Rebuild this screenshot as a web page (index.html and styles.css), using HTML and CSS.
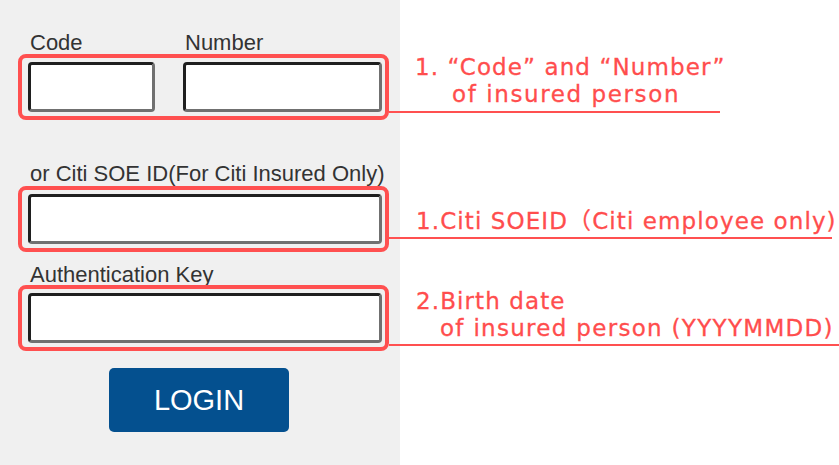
FILE: index.html
```html
<!DOCTYPE html>
<html lang="en">
<head>
<meta charset="utf-8">
<title>Login</title>
<link rel="stylesheet" href="styles.css">
</head>
<body>
<div class="page">
  <div class="form">
    <div class="labels-row">
      <span class="label label-code">Code</span>
      <span class="label label-number">Number</span>
    </div>
    <div class="row">
      <div class="hl">
        <div class="input input-code"></div>
        <div class="input input-number"></div>
      </div>
      <div class="note note1">
        <span class="nl nl1a">1. “Code” and “Number”</span>
        <span class="nl nl1b">of insured person</span>
      </div>
    </div>

    <div class="label label-soe">or Citi SOE ID(For Citi Insured Only)</div>
    <div class="row row-soe">
      <div class="hl">
        <div class="input input-wide"></div>
      </div>
      <div class="note note2">
        <span class="nl">1.Citi SOEID（Citi employee only)</span>
      </div>
    </div>

    <div class="label label-auth">Authentication Key</div>
    <div class="row row-auth">
      <div class="hl">
        <div class="input input-wide"></div>
      </div>
      <div class="note note3">
        <span class="nl">2.Birth date</span>
        <span class="nl nl3b">of insured person (YYYYMMDD)</span>
      </div>
    </div>

    <div class="btn-row">
      <button class="login" type="button">LOGIN</button>
    </div>
  </div>
</div>
</body>
</html>
```

FILE: styles.css
```css
* { box-sizing: border-box; }
html, body { margin: 0; padding: 0; }
body {
  font-family: "Liberation Sans", Arial, sans-serif;
  background: #ffffff;
}
.page {
  width: 839px;
  height: 465px;
  overflow: hidden;
  background: linear-gradient(to right, #f0f0f0 0, #f0f0f0 400px, #ffffff 400px);
}
.form {
  padding-top: 32px;
}
.label {
  font-size: 22px;
  line-height: 22px;
  color: #333333;
  white-space: nowrap;
}
.labels-row {
  display: flex;
  padding-left: 30px;
}
.label-code { width: 155px; }
.label-soe { margin-top: 43px; padding-left: 30px; }
.label-auth { margin-top: 12px; margin-bottom: -1px; padding-left: 30px; }

.row {
  display: flex;
  margin-left: 18px;
}
.row-soe { margin-top: 1px; }
.hl {
  width: 371px;
  flex: none;
  display: flex;
  gap: 28px;
  border: 4px solid #ff5050;
  border-radius: 8px;
  padding: 4px 3px 4px 6px;
}
.input {
  height: 50px;
  background: #ffffff;
  border: 3px solid;
  border-color: #1f1f1f #707070 #707070 #1f1f1f;
  border-radius: 4px;
}
.input-code { width: 127px; }
.input-number { width: 199px; }
.input-wide { flex: 1; }

.note {
  align-self: flex-end;
  border-bottom: 2px solid #ff5050;
  color: #ff4d4d;
  font-family: "DejaVu Sans", "Noto Sans CJK JP", sans-serif;
  font-size: 23px;
  letter-spacing: 1.1px;
  -webkit-text-stroke: 0.3px #ff4d4d;
  line-height: 27px;
  white-space: nowrap;
}
.nl { display: block; }
.note1 {
  width: 331px;
  margin-bottom: 7px;
  padding-left: 26px;
  padding-bottom: 3px;
}
.nl1b { padding-left: 37px; letter-spacing: 1.6px; }
.note2 {
  width: 443px;
  margin-bottom: 13px;
  padding-left: 27px;
  padding-bottom: 2px;
}
.note3 {
  flex: 1;
  margin-bottom: 5px;
  padding-left: 27px;
  padding-bottom: 2px;
}
.nl3b { padding-left: 24px; letter-spacing: 1.3px; }

.btn-row {
  padding-left: 109px;
  margin-top: 17px;
}
.login {
  width: 180px;
  height: 64px;
  border: none;
  border-radius: 5px;
  background: #04508f;
  color: #ffffff;
  font-family: "Liberation Sans", Arial, sans-serif;
  font-size: 29px;
  padding: 0;
  cursor: pointer;
}
```
